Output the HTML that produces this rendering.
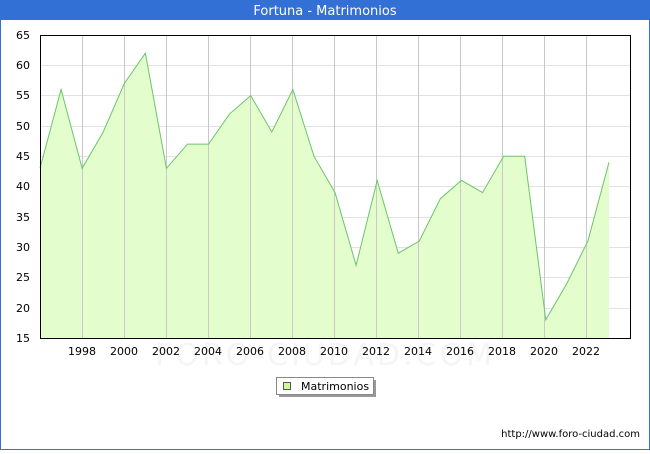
<!DOCTYPE html><html><head><style>body{margin:0;width:650px;height:450px;overflow:hidden;background:#fff;font-family:"DejaVu Sans","Liberation Sans",sans-serif}</style></head><body>
<svg width="650" height="450" xmlns="http://www.w3.org/2000/svg" font-family="DejaVu Sans, Liberation Sans, sans-serif">
<rect x="0.5" y="0.5" width="649" height="449" fill="#fff" stroke="#3370d6"/>
<rect x="0" y="0" width="650" height="20" fill="#3370d6"/>
<text x="325" y="15" fill="#fff" font-size="13" text-anchor="middle">Fortuna - Matrimonios</text>
<g stroke="#e2e2e2" stroke-width="1">
<line x1="40" x2="630" y1="65.5" y2="65.5"/><line x1="40" x2="630" y1="95.5" y2="95.5"/><line x1="40" x2="630" y1="126.5" y2="126.5"/><line x1="40" x2="630" y1="156.5" y2="156.5"/><line x1="40" x2="630" y1="186.5" y2="186.5"/><line x1="40" x2="630" y1="217.5" y2="217.5"/><line x1="40" x2="630" y1="247.5" y2="247.5"/><line x1="40" x2="630" y1="277.5" y2="277.5"/><line x1="40" x2="630" y1="308.5" y2="308.5"/>
</g>
<g transform="translate(40,0) scale(1.0035,1) translate(-40,0)">
<polygon fill="#e3fdcc" stroke="none" points="40,338 40,168.3 61,89.5 82,168.3 103,132 124,83.5 145,53.2 166,168.3 187,144.1 208,144.1 229,113.8 250,95.6 271,132 292,89.5 313,156.2 334,192.6 355,265.3 376,180.4 397,253.2 418,241 439,198.6 460,180.4 481,192.6 502,156.2 523,156.2 544,319.8 565,283.5 586,241 607,162.3 607,338"/>
</g>
<g stroke="#c8c8c8" stroke-width="1">
<line x1="82.5" x2="82.5" y1="35" y2="338"/><line x1="124.5" x2="124.5" y1="35" y2="338"/><line x1="166.5" x2="166.5" y1="35" y2="338"/><line x1="208.5" x2="208.5" y1="35" y2="338"/><line x1="250.5" x2="250.5" y1="35" y2="338"/><line x1="292.5" x2="292.5" y1="35" y2="338"/><line x1="334.5" x2="334.5" y1="35" y2="338"/><line x1="376.5" x2="376.5" y1="35" y2="338"/><line x1="418.5" x2="418.5" y1="35" y2="338"/><line x1="460.5" x2="460.5" y1="35" y2="338"/><line x1="502.5" x2="502.5" y1="35" y2="338"/><line x1="544.5" x2="544.5" y1="35" y2="338"/><line x1="586.5" x2="586.5" y1="35" y2="338"/>
</g>
<g transform="translate(40,0) scale(1.0035,1) translate(-40,0)">
<polyline fill="none" stroke="#6cc46c" stroke-width="1" points="40,168.3 61,89.5 82,168.3 103,132 124,83.5 145,53.2 166,168.3 187,144.1 208,144.1 229,113.8 250,95.6 271,132 292,89.5 313,156.2 334,192.6 355,265.3 376,180.4 397,253.2 418,241 439,198.6 460,180.4 481,192.6 502,156.2 523,156.2 544,319.8 565,283.5 586,241 607,162.3"/>
</g>
<rect x="40.5" y="35.5" width="590" height="303" fill="none" stroke="#000"/>
<text x="325" y="365" font-size="30" fill="#f5f5f5" text-anchor="middle" letter-spacing="3">FORO-CIUDAD.COM</text>
<g font-size="11" fill="#000" text-anchor="end">
<text x="30" y="39">65</text><text x="30" y="69">60</text><text x="30" y="99">55</text><text x="30" y="130">50</text><text x="30" y="160">45</text><text x="30" y="190">40</text><text x="30" y="221">35</text><text x="30" y="251">30</text><text x="30" y="281">25</text><text x="30" y="312">20</text><text x="30" y="342">15</text>
</g>
<g font-size="11" fill="#000" text-anchor="middle">
<text x="82" y="355">1998</text><text x="124" y="355">2000</text><text x="166" y="355">2002</text><text x="208" y="355">2004</text><text x="250" y="355">2006</text><text x="292" y="355">2008</text><text x="334" y="355">2010</text><text x="376" y="355">2012</text><text x="418" y="355">2014</text><text x="460" y="355">2016</text><text x="502" y="355">2018</text><text x="544" y="355">2020</text><text x="586" y="355">2022</text>
</g>
<rect x="279" y="380" width="97" height="17" fill="#999"/>
<rect x="276.5" y="377.5" width="97" height="17" fill="#fff" stroke="#888"/>
<rect x="283.5" y="382.5" width="7" height="7" fill="#ccfa99" stroke="#555"/>
<text x="301" y="390" font-size="11">Matrimonios</text>
<text x="640" y="437" font-size="10" text-anchor="end">http://www.foro-ciudad.com</text>
</svg></body></html>
